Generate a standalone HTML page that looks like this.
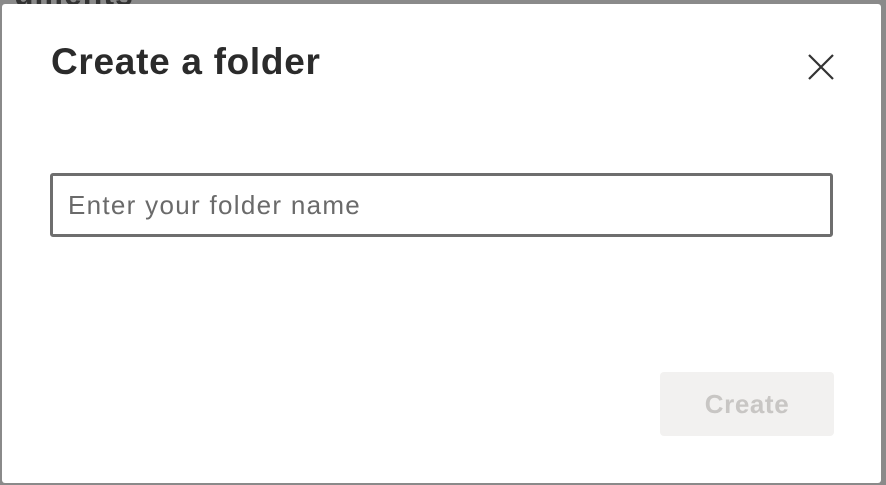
<!DOCTYPE html>
<html><head><meta charset="utf-8"><style>
html,body{margin:0;padding:0;width:886px;height:485px;overflow:hidden;background:#8a8a8a;font-family:"Liberation Sans",sans-serif;}
.bgtext{position:absolute;left:14px;top:-24px;font-size:32px;font-weight:bold;color:#333;letter-spacing:1px;}
.dlg{position:absolute;left:2px;top:4px;width:879px;height:479px;background:#fff;border-radius:3px;}
h1{position:absolute;left:49px;top:37px;margin:0;font-size:37px;font-weight:bold;color:#2b2b2b;letter-spacing:0.7px;}
.x{position:absolute;left:805px;top:49px;}
.inp{position:absolute;left:48px;top:169px;width:777px;height:58px;border:3px solid #6e6e6e;border-radius:3px;box-sizing:content-box;}
.inp span{position:absolute;left:15px;top:14px;font-size:26px;color:#6a6a6a;letter-spacing:1.3px;}
.btn{position:absolute;left:658px;top:368px;width:174px;height:64px;background:#f2f1f0;border-radius:4px;color:#c8c6c4;font-size:26px;font-weight:bold;text-align:center;line-height:64px;letter-spacing:0.6px;}
</style></head><body>
<div class="bgtext">uments</div>
<div class="dlg">
<h1>Create a folder</h1>
<svg class="x" width="28" height="28" viewBox="0 0 28 28"><path d="M2 2L26 26M26 2L2 26" stroke="#333" stroke-width="2.2"/></svg>
<div class="inp"><span>Enter your folder name</span></div>
<div class="btn">Create</div>
</div>
</body></html>
